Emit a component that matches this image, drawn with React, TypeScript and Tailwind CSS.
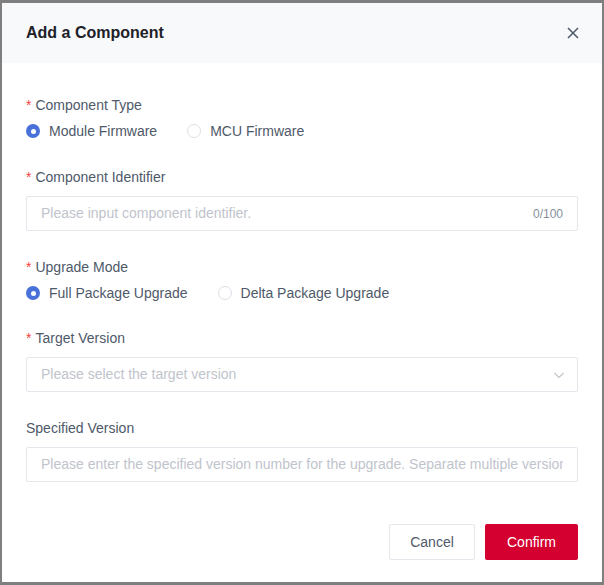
import React from "react";

const Label = ({ text, required = true }: { text: string; required?: boolean }) => (
  <div className="h-5 leading-5 text-[14px] text-[#4e5969]">
    {required && <span className="text-[#f53f3f] mr-1">*</span>}
    {text}
  </div>
);

const Radio = ({ label, checked }: { label: string; checked?: boolean }) => (
  <label className="flex items-center gap-[9px] mr-[30px]">
    {checked ? (
      <span className="w-[14px] h-[14px] rounded-full bg-[#4a70d9] flex items-center justify-center">
        <span className="w-[5px] h-[5px] rounded-full bg-white" />
      </span>
    ) : (
      <span className="w-[14px] h-[14px] rounded-full border border-[#dcdfe6] bg-white" />
    )}
    <span className="text-[14px] text-[#4e5969]">{label}</span>
  </label>
);

const App = () => {
  return (
    <div
      className="w-[604px] h-[585px] bg-[#7f7f7f] pt-[3px] pl-[2px]"
      style={{ fontFamily: '"Liberation Sans", Arial, sans-serif' }}
    >
      <div className="w-[600px] h-[579px] bg-white flex flex-col">
        {/* Header */}
        <div className="h-[60px] bg-[#f8f9fb] flex items-center justify-between pl-[24px] pr-[22px]">
          <h2 className="text-[16px] font-bold text-[#1d2129]">Add a Component</h2>
          <svg className="w-[14px] h-[14px] text-[#4e5969]" viewBox="0 0 14 14" fill="none" stroke="currentColor" strokeWidth={1.5}>
            <path d="M2 2l10 10M12 2L2 12" />
          </svg>
        </div>

        {/* Body */}
        <div className="flex flex-col px-[24px] pt-[32px]">
          <Label text="Component Type" />
          <div className="flex items-center h-5 mt-[6px]">
            <Radio label="Module Firmware" checked />
            <Radio label="MCU Firmware" />
          </div>

          <div className="mt-[26px]">
            <Label text="Component Identifier" />
          </div>
          <div className="mt-[9px] h-[35px] border border-[#e5e6eb] rounded-[2px] flex items-center px-[14px]">
            <span className="flex-1 text-[14px] text-[#c0c4cc]">Please input component identifier.</span>
            <span className="text-[12px] text-[#86909c]">0/100</span>
          </div>

          <div className="mt-[26px]">
            <Label text="Upgrade Mode" />
          </div>
          <div className="flex items-center h-5 mt-[6px]">
            <Radio label="Full Package Upgrade" checked />
            <Radio label="Delta Package Upgrade" />
          </div>

          <div className="mt-[25px]">
            <Label text="Target Version" />
          </div>
          <div className="mt-[9px] h-[35px] border border-[#e5e6eb] rounded-[2px] flex items-center pl-[14px] pr-[12px]">
            <span className="flex-1 text-[14px] text-[#c0c4cc]">Please select the target version</span>
            <svg className="w-[12px] h-[12px] text-[#c0c4cc]" viewBox="0 0 12 12" fill="none" stroke="currentColor" strokeWidth={1.2}>
              <path d="M1.5 4l4.5 4.5L10.5 4" />
            </svg>
          </div>

          <div className="mt-[26px]">
            <Label text="Specified Version" required={false} />
          </div>
          <div className="mt-[9px] h-[35px] border border-[#e5e6eb] rounded-[2px] flex items-center px-[14px] overflow-hidden">
            <span className="text-[14px] text-[#c0c4cc] whitespace-nowrap overflow-hidden">
              Please enter the specified version number for the upgrade. Separate multiple versions with commas.
            </span>
          </div>

          {/* Footer */}
          <div className="flex justify-end gap-[10px] mt-[42px]">
            <button className="w-[86px] h-[36px] border border-[#e5e6eb] rounded-[2px] text-[14px] text-[#4e5969] bg-white">
              Cancel
            </button>
            <button className="w-[93px] h-[36px] rounded-[2px] text-[14px] text-white bg-[#d40030]">
              Confirm
            </button>
          </div>
        </div>
      </div>
    </div>
  );
};

export default App;
